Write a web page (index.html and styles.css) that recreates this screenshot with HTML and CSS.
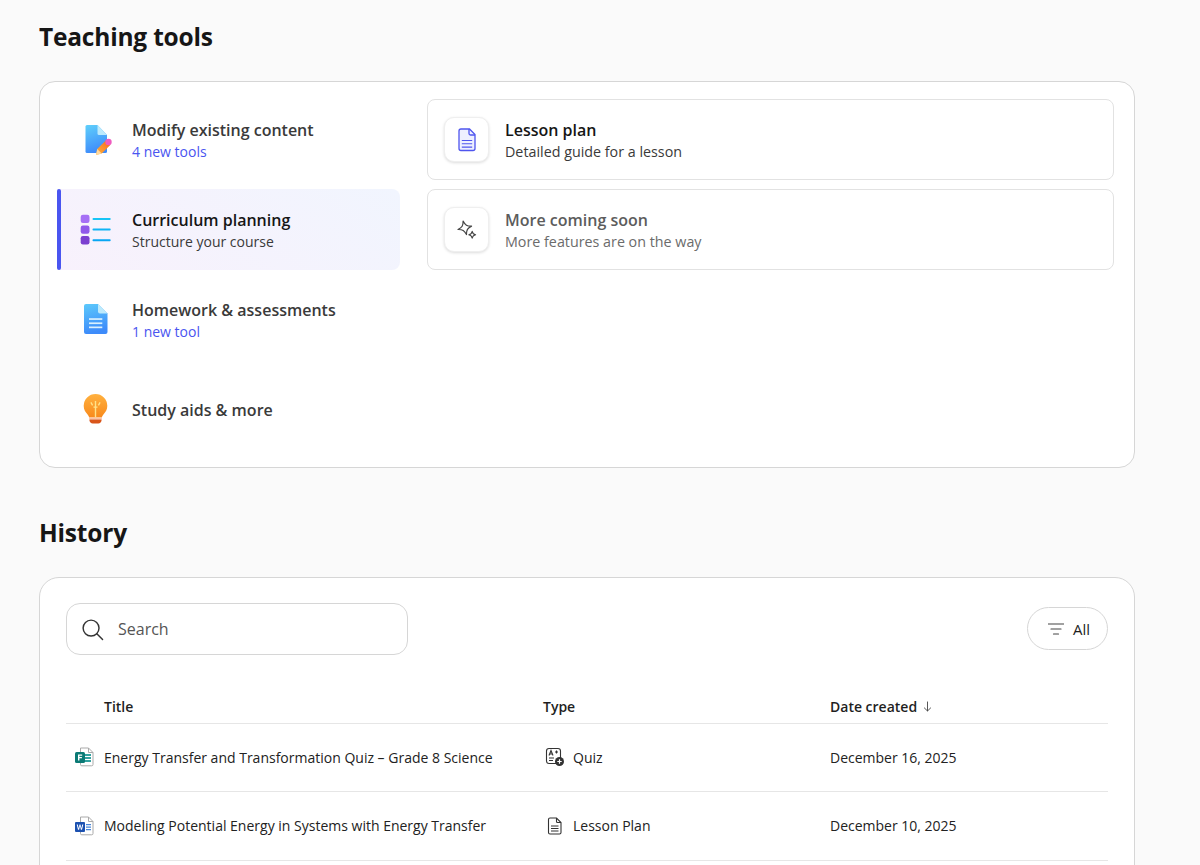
FILE: index.html
```html
<!DOCTYPE html>
<html lang="en">
<head>
<meta charset="utf-8">
<title>Teaching tools</title>
<link rel="stylesheet" href="styles.css">
</head>
<body>
<main class="page">
  <h1 class="section-title first">Teaching tools</h1>
  <section class="card tools">
    <nav class="categories">
      <a class="category">
        <svg class="cat-icon" viewBox="0 0 32 32">
          <defs>
            <linearGradient id="docA" x1="0" y1="0" x2="0.3" y2="1"><stop offset="0" stop-color="#5fd0fb"/><stop offset="1" stop-color="#3f8cfb"/></linearGradient>
            <linearGradient id="penA" x1="0" y1="1" x2="1" y2="0"><stop offset="0" stop-color="#ffb638"/><stop offset="1" stop-color="#f7651f"/></linearGradient>
          </defs>
          <path d="M7 1h10.500l9.500 10v16.500a1.500 1.500 0 0 1-1.500 1.500H7a1.500 1.500 0 0 1-1.500-1.500V2.500A1.500 1.500 0 0 1 7 1z" fill="url(#docA)"/>
          <path d="M17.500 1l9.500 10h-8a1.500 1.500 0 0 1-1.500-1.500z" fill="#bdeafc"/>
          <path d="M16 31l1.200-6L26 16.200l4.500 4.500L21.700 29.500z" fill="url(#penA)"/>
          <path d="M16 31l1.200-6 4.500 4.500z" fill="#ffd9a0"/>
          <circle cx="28.500" cy="18" r="3.200" fill="#ee5bc0"/>
        </svg>
        <span class="cat-text two">
          <span class="cat-name">Modify existing content</span>
          <span class="cat-sub link">4 new tools</span>
        </span>
      </a>
      <a class="category active">
        <svg class="cat-icon" viewBox="0 0 32 32">
          <rect x="0.700" y="0.800" width="8.800" height="8.200" rx="2.200" fill="#a56ff5"/>
          <rect x="0.700" y="11.500" width="8.800" height="8.200" rx="2.200" fill="#9058ea"/>
          <rect x="0.700" y="22" width="8.800" height="8.500" rx="2.200" fill="#7b3fd0"/>
          <rect x="12.500" y="4" width="18.200" height="1.900" rx=".9" fill="#17c4f5"/>
          <rect x="12.500" y="14.600" width="18.200" height="1.900" rx=".9" fill="#0fb4f5"/>
          <rect x="12.500" y="25.300" width="18.200" height="1.900" rx=".9" fill="#08a6f3"/>
        </svg>
        <span class="cat-text two">
          <span class="cat-name">Curriculum planning</span>
          <span class="cat-sub">Structure your course</span>
        </span>
      </a>
      <a class="category">
        <svg class="cat-icon" viewBox="0 0 32 32">
          <defs>
            <linearGradient id="docB" x1="0" y1="0" x2="0.2" y2="1"><stop offset="0" stop-color="#5cc9fb"/><stop offset="1" stop-color="#3d8bfa"/></linearGradient>
          </defs>
          <path d="M6 0h12l9.500 9.500V28a2 2 0 0 1-2 2H6a2 2 0 0 1-2-2V2a2 2 0 0 1 2-2z" fill="url(#docB)"/>
          <path d="M18 0l9.500 9.500H20a2 2 0 0 1-2-2z" fill="#bdeafc"/>
          <rect x="9" y="14.200" width="13.300" height="1.700" fill="#d9f0fe"/>
          <rect x="9" y="18.400" width="13.300" height="1.700" fill="#d9f0fe"/>
          <rect x="9" y="22.500" width="13.300" height="1.700" fill="#d9f0fe"/>
        </svg>
        <span class="cat-text two">
          <span class="cat-name">Homework &amp; assessments</span>
          <span class="cat-sub link">1 new tool</span>
        </span>
      </a>
      <a class="category">
        <svg class="cat-icon" viewBox="0 0 32 32">
          <defs>
            <linearGradient id="bulb" x1="0" y1="0" x2="0" y2="1"><stop offset="0" stop-color="#ffb13f"/><stop offset="1" stop-color="#f88a1c"/></linearGradient>
          </defs>
          <g transform="translate(-.5 -1)">
            <path d="M16 1a11.800 11.800 0 0 1 11.800 11.800c0 3.800-1.800 6.400-3.700 8.500-1 1.100-1.600 2.300-1.800 3.200H9.700c-.2-.9-.8-2.100-1.800-3.200C6 19.200 4.200 16.600 4.200 12.800A11.800 11.800 0 0 1 16 1z" fill="url(#bulb)"/>
            <path d="M15.300 8h1.400v16.500h-1.400zM10.800 9.700l1.200-.7 1.700 3-1.200.7zM21.200 9.700l-1.200-.7-1.700 3 1.200.7zM14 13.500h4v1.200h-4z" fill="#ffe38a"/>
            <rect x="9.700" y="24.500" width="12.600" height="2" fill="#fbc3a3"/>
            <path d="M10 26.500h12v.8c0 1.800-1.500 3.200-3.200 3.200h-5.600c-1.700 0-3.200-1.400-3.200-3.200z" fill="#d9551a"/>
          </g>
        </svg>
        <span class="cat-text">
          <span class="cat-name">Study aids &amp; more</span>
        </span>
      </a>
    </nav>
    <div class="tool-list">
      <a class="tool">
        <span class="tool-icon">
          <svg viewBox="0 0 24 24" class="tool-svg">
            <path d="M6 1h8.500L20 6.500V20.500a2 2 0 0 1-2 2H6a2 2 0 0 1-2-2V3a2 2 0 0 1 2-2z" fill="#eef0ff" stroke="#4f55ee" stroke-width="1.300"/>
            <path d="M14 1v4.500a1.500 1.500 0 0 0 1.500 1.500H20" fill="none" stroke="#4f55ee" stroke-width="1.300"/>
            <path d="M6.800 12.500h10.400M6.800 15.800h10.400M6.800 19.100h10.400" stroke="#4f55ee" stroke-width="1.100"/>
          </svg>
        </span>
        <span class="tool-text">
          <span class="tool-name">Lesson plan</span>
          <span class="tool-sub">Detailed guide for a lesson</span>
        </span>
      </a>
      <a class="tool muted">
        <span class="tool-icon">
          <svg viewBox="0 0 24 24" class="tool-svg">
            <path d="M0-7C1-2.500 2.500-1 7 0 2.500 1 1 2.500 0 7-1 2.500-2.500 1-7 0-2.500-1-1-2.500 0-7z" transform="translate(9.800 9.800) rotate(-14)" fill="none" stroke="#444" stroke-width="1.200" stroke-linejoin="round"/>
            <path d="M0-3.400C.4-1.200 1.200-.4 3.400 0 1.200.4.400 1.200 0 3.400-.4 1.200-1.200.4-3.400 0-1.200-.4-.4-1.200 0-3.400z" transform="translate(17.200 16.800)" fill="none" stroke="#444" stroke-width="1.100" stroke-linejoin="round"/>
          </svg>
        </span>
        <span class="tool-text">
          <span class="tool-name">More coming soon</span>
          <span class="tool-sub">More features are on the way</span>
        </span>
      </a>
    </div>
  </section>

  <h2 class="section-title second">History</h2>
  <section class="card history">
    <div class="toolbar">
      <label class="search">
        <svg class="search-icon" viewBox="0 0 24 24"><circle cx="10.500" cy="10.500" r="8.300" fill="none" stroke="#333" stroke-width="1.500"/><path d="M16.500 16.500l6 6" stroke="#333" stroke-width="1.500" stroke-linecap="round"/></svg>
        <span class="search-text">Search</span>
      </label>
      <button class="filter">
        <svg class="filter-icon" viewBox="0 0 16 12"><path d="M.5 1h15M3 6h10M5.500 11h5" stroke="#444" stroke-width="1.200" stroke-linecap="round"/></svg>
        <span>All</span>
      </button>
    </div>
    <div class="table">
      <div class="row head">
        <div class="c-title">Title</div>
        <div class="c-type">Type</div>
        <div class="c-date">Date created
          <svg class="sort" viewBox="0 0 10 12"><path d="M5 .5v10.500M1.200 7.300L5 11l3.800-3.700" fill="none" stroke="#444" stroke-width="1"/></svg>
        </div>
      </div>
      <div class="row">
        <div class="c-title">
          <svg class="file-icon" viewBox="0 0 20 20">
            <path d="M6.500 1h8l4.500 4.500v12a1.300 1.300 0 0 1-1.300 1.300H7.800a1.300 1.300 0 0 1-1.300-1.300z" fill="#fff" stroke="#aaa" stroke-width="1"/>
            <path d="M14.500 1v4.500H19" fill="none" stroke="#aaa" stroke-width="1"/>
            <path d="M11 7h6v2h-6zM11 10h6v2h-6zM11 13h6v2h-6z" fill="#33a2a0"/>
            <rect x="1" y="5" width="10" height="11" rx="1.500" fill="#0b7a75"/>
            <path d="M4 7.500h4.200v1.200H5.400v1.300h2.500v1.200H5.400v2.300H4z" fill="#fff"/>
          </svg>
          <span>Energy Transfer and Transformation Quiz – Grade 8 Science</span>
        </div>
        <div class="c-type">
          <svg class="type-icon" viewBox="0 0 20 20">
            <rect x="1.500" y="1.500" width="14" height="15" rx="2.500" fill="#fff" stroke="#333" stroke-width="1.100"/>
            <path d="M4 8.500l2-5 2 5M4.800 7h2.400M10 5h3M11.500 3.500v3M4 11h5M4 13.500h4" fill="none" stroke="#333" stroke-width="1.100"/>
            <circle cx="14.500" cy="14.500" r="4.500" fill="#333"/>
            <path d="M12.300 14.500h4.400M14.500 12.300v4.400" stroke="#fff" stroke-width="1.200"/>
          </svg>
          <span>Quiz</span>
        </div>
        <div class="c-date">December 16, 2025</div>
      </div>
      <div class="row">
        <div class="c-title">
          <svg class="file-icon" viewBox="0 0 20 20">
            <path d="M6.500 1h8l4.500 4.500v12a1.300 1.300 0 0 1-1.300 1.300H7.800a1.300 1.300 0 0 1-1.300-1.300z" fill="#fff" stroke="#aaa" stroke-width="1"/>
            <path d="M14.500 1v4.500H19" fill="none" stroke="#aaa" stroke-width="1"/>
            <path d="M12 8h5v1.200h-5zM12 10.500h5v1.200h-5zM12 13h5v1.200h-5z" fill="#4a86d8"/>
            <rect x="1" y="6" width="10" height="10" rx="1" fill="#1c51b0"/>
            <path d="M2.700 8.500h1.100l.8 3.800.9-3.800h1l.9 3.800.8-3.800h1.100l-1.300 5.200h-1.100L6 10l-.9 3.700H4z" fill="#fff"/>
          </svg>
          <span>Modeling Potential Energy in Systems with Energy Transfer</span>
        </div>
        <div class="c-type">
          <svg class="type-icon" viewBox="0 0 20 20">
            <path d="M5 2h6.500L16 6.500V16.500a1.500 1.500 0 0 1-1.500 1.500h-9.500A1.500 1.500 0 0 1 3.500 16.500v-13A1.500 1.500 0 0 1 5 2z" fill="#fff" stroke="#333" stroke-width="1.100"/>
            <path d="M11.500 2v3.500a1 1 0 0 0 1 1H16M6 10h7.500M6 12.500h7.500M6 15h7.500" fill="none" stroke="#333" stroke-width="1.100"/>
          </svg>
          <span>Lesson Plan</span>
        </div>
        <div class="c-date">December 10, 2025</div>
      </div>
    </div>
  </section>
</main>
</body>
</html>
```
FILE: styles.css
```css
* { box-sizing: border-box; }
html, body { margin: 0; height: 865px; overflow: hidden; }
body {
  background: #fafafa;
  color: #1f1f1f;
  font-family: "Open Sans", "Noto Sans", "Liberation Sans", sans-serif;
}
.page { width: 1096px; margin-left: 39px; }
.section-title {
  margin: 0;
  font-size: 24.500px;
  line-height: 32px;
  font-weight: 700;
  letter-spacing: -0.2px;
  color: #161616;
}
.first { padding-top: 21px; padding-bottom: 28px; }
.second { padding-top: 49px; padding-bottom: 28px; }
.card {
  background: #fff;
  border: 1px solid #d6d6d6;
  border-radius: 16px;
}
.tools {
  display: flex;
  gap: 27px;
  padding: 17px 20px 17px 17px;
  height: 387px;
}
.categories { width: 343px; flex: none; display: flex; flex-direction: column; gap: 9px; }
.category {
  position: relative;
  height: 81px;
  display: flex;
  align-items: center;
  gap: 20px;
  padding-left: 23px;
  border-radius: 2px 8px 8px 2px;
}
.category.active {
  background: linear-gradient(35deg, #f8f1fc, #f1f5fe);
}
.category.active::before {
  content: "";
  position: absolute;
  left: 0;
  top: 0;
  bottom: 0;
  width: 4px;
  border-radius: 2px;
  background: #4a55f0;
}
.cat-icon { width: 32px; height: 32px; flex: none; }
.cat-text, .tool-text { display: flex; flex-direction: column; }
.cat-text.two, .tool-text { padding-top: 2px; }
.cat-name, .tool-name {
  font-size: 16px;
  line-height: 22px;
  font-weight: 600;
  color: #3a3a3a;
}
.active .cat-name, .tool-name { color: #161616; }
.cat-sub, .tool-sub {
  font-size: 14px;
  line-height: 22px;
  color: #3a3a3a;
}
.tool-sub { font-size: 14.300px; }
.cat-sub.link { color: #4a55f0; }
.tool-list { flex: 1; display: flex; flex-direction: column; gap: 9px; }
.tool {
  height: 81px;
  display: flex;
  align-items: center;
  gap: 16px;
  padding-left: 16px;
  border: 1px solid #e2e2e2;
  border-radius: 8px;
}
.tool-icon {
  width: 45px;
  height: 45px;
  display: flex;
  align-items: center;
  justify-content: center;
  border-radius: 10px;
  background: #fff;
  border: 1px solid #efefef;
  box-shadow: 0 1px 3px rgba(0,0,0,.14);
}
.tool-svg { width: 24px; height: 24px; }
.muted .tool-name { color: #5c5c5c; }
.muted .tool-sub { color: #6b6b6b; }
.history { border-radius: 20px; padding: 25px 26px 40px; }
.toolbar { display: flex; align-items: center; justify-content: space-between; height: 52px; margin-bottom: 33px; }
.search {
  width: 342px;
  height: 52px;
  display: flex;
  align-items: center;
  gap: 14px;
  padding-left: 14px;
  border: 1px solid #d6d6d6;
  border-radius: 14px;
}
.search-icon { width: 23px; height: 23px; }
.search-text { font-size: 16px; color: #555; }
.filter {
  width: 81px;
  height: 43px;
  margin-bottom: 1px;
  padding: 0 0 0 3px;
  display: flex;
  align-items: center;
  justify-content: center;
  gap: 9px;
  background: #fff;
  border: 1px solid #d6d6d6;
  border-radius: 22px;
  font: inherit;
  font-size: 15px;
  color: #1f1f1f;
}
.filter-icon { width: 16px; height: 12px; }
.row {
  display: grid;
  grid-template-columns: 477px 287px 1fr;
  align-items: center;
  height: 68.500px;
  border-bottom: 1px solid #e6e6e6;
  font-size: 14px;
  color: #222;
}
.row.head { height: 35.500px; padding-top: 2px; font-weight: 600; color: #1f1f1f; }
.c-title { padding-left: 38px; position: relative; }
.c-type, .c-date { display: flex; align-items: center; }
.file-icon { position: absolute; left: 8px; top: 50%; margin-top: -10px; width: 20px; height: 20px; }
.type-icon { width: 20px; height: 20px; margin-left: 2px; margin-right: 8px; }
.sort { width: 9px; height: 11px; margin-left: 6px; }
```
